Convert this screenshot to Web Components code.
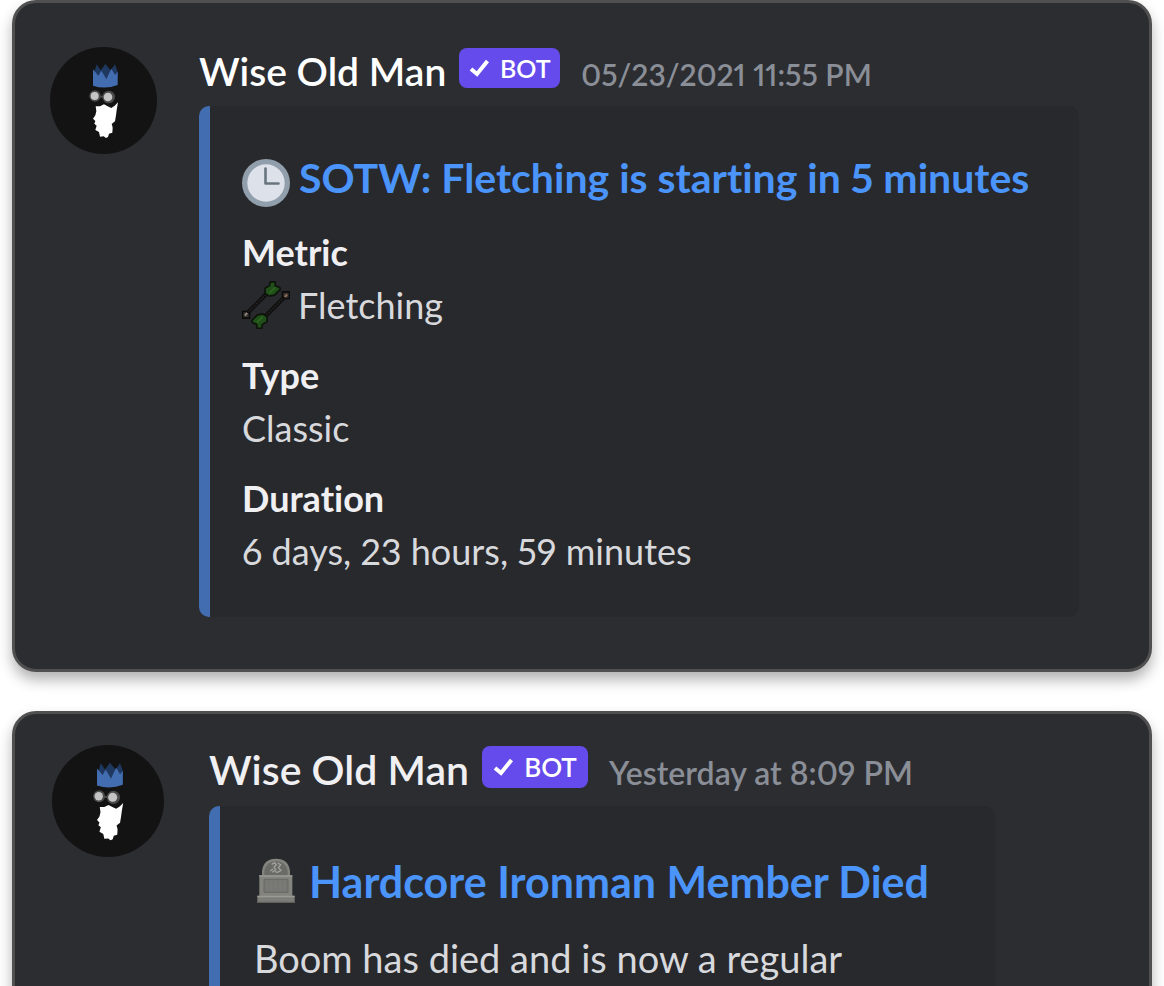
<!DOCTYPE html>
<html lang="en">
<head>
<meta charset="utf-8">
<title>Wise Old Man</title>
<style>
  html { scrollbar-width: none; }
  body {
    margin: 0;
    padding: 0 12px;
    background: #fff;
    font-family: Lato, "Open Sans", sans-serif;
    font-variant-ligatures: none;
    font-variant-numeric: proportional-nums;
    color: #d8d9dd;
  }
  main { display: flex; flex-direction: column; gap: 39px; }
</style>
</head>
<body>
<main>
  <message-card stamp="05/23/2021 11:55 PM">
    <embed-panel>
      <clock-icon slot="icon"></clock-icon>
      <a slot="title" href="#competition">SOTW: Fletching is starting in 5 minutes</a>
      <embed-field label="Metric"><arrows-icon></arrows-icon>Fletching</embed-field>
      <embed-field label="Type">Classic</embed-field>
      <embed-field label="Duration">6 days, 23 hours, 59 minutes</embed-field>
    </embed-panel>
  </message-card>
  <message-card large stamp="Yesterday at 8:09 PM">
    <embed-panel>
      <grave-icon slot="icon"></grave-icon>
      <a slot="title" href="#member">Hardcore Ironman Member Died</a>
      <embed-text>Boom has died and is now a regular</embed-text>
    </embed-panel>
  </message-card>
</main>

<script>
const define = (name, html, setup) => {
  const template = document.createElement('template');
  template.innerHTML = html;
  customElements.define(name, class extends HTMLElement {
    constructor() {
      super();
      this.attachShadow({ mode: 'open' }).append(template.content.cloneNode(true));
    }
    connectedCallback() { if (setup) setup(this, this.shadowRoot); }
  });
};

define('old-man-avatar', `
  <style>
    :host { display: block; width: var(--avatar); height: var(--avatar); }
    svg { display: block; width: 100%; height: 100%; }
  </style>
  <svg viewBox="0 0 107 107" role="img" aria-label="Wise Old Man avatar">
    <circle cx="53.5" cy="53.5" r="53.5" fill="#131313"/>
    <g transform="translate(30 8) scale(.3333)">
      <path d="M40 60L50 28L62 46L76 27L92 46L105 28L113 50V70H40Z" fill="#1f3860"/>
      <path d="M39 43L55 62L64 47L79 72L94 41L105 60L113 50V90Q76 104 39 92Z" fill="#436db1"/>
      <circle cx="45" cy="123" r="17" fill="#4b4b4b"/>
      <circle cx="86" cy="126" r="19" fill="#4b4b4b"/>
      <path d="M58 122H72V128H58Z" fill="#4b4b4b"/>
      <circle cx="44" cy="123" r="12" fill="#c4c4c4"/>
      <circle cx="84" cy="126" r="13" fill="#c4c4c4"/>
      <path d="M47 154L60 154L72 148L83 154L94 159L104 152L114 142L110 166L108 181L105 199L95 207L97 213L98 219L97 233L87 236L84 246L78 249L71 244L60 245L57 231L46 225L50 212L43 206L46 198L39 191L46 181L49 169Z" fill="#fff"/>
    </g>
  </svg>`);

define('clock-icon', `
  <style>:host, svg { display: block; width: 48px; height: 48px; }</style>
  <svg viewBox="0 0 48 48" aria-hidden="true">
    <circle cx="24" cy="24" r="24" fill="#919eab"/>
    <circle cx="24" cy="24" r="18.7" fill="#dde2ea"/>
    <path d="M23.5 9.5V24.5H36.5" fill="none" stroke="#68757f" stroke-width="2.6" stroke-linecap="round" stroke-linejoin="round"/>
  </svg>`);

define('arrows-icon', `
  <style>:host { display: block; width: 48px; height: 48px; } svg { display: block; }</style>
  <svg width="48" height="48" viewBox="20 20 146 146" aria-hidden="true">
    <g>
      <path d="M38 116L98 56" stroke="#101010" stroke-width="13"/>
      <path d="M38 116L98 56" stroke="#292521" stroke-width="4" stroke-dasharray="5 4"/>
      <path d="M90 42L104 34L106 22L121 23L121 34L135 40L136 46L119 63L103 66L90 58Z" fill="#214f19" stroke="#0c130a" stroke-width="5"/>
      <path d="M103 57L121 40" stroke="#2d6b20" stroke-width="4"/>
      <path d="M22 113L32 112L43 118L43 133L22 133Z" fill="#37322f" stroke="#0b0b0b" stroke-width="5"/>
      <path d="M29 125L36 117" stroke="#8a817b" stroke-width="6"/>
    </g>
    <g transform="rotate(180 93 93)">
      <path d="M38 116L98 56" stroke="#101010" stroke-width="13"/>
      <path d="M38 116L98 56" stroke="#292521" stroke-width="4" stroke-dasharray="5 4"/>
      <path d="M90 42L104 34L106 22L121 23L121 34L135 40L136 46L119 63L103 66L90 58Z" fill="#214f19" stroke="#0c130a" stroke-width="5"/>
      <path d="M103 57L121 40" stroke="#2d6b20" stroke-width="4"/>
      <path d="M22 113L32 112L43 118L43 133L22 133Z" fill="#37322f" stroke="#0b0b0b" stroke-width="5"/>
      <path d="M29 125L36 117" stroke="#8f6a55" stroke-width="6"/>
    </g>
  </svg>`);

define('grave-icon', `
  <style>:host { display: block; width: 46px; height: 48px; } svg { display: block; }</style>
  <svg width="44" height="48" viewBox="27 20 132 144" aria-hidden="true">
    <path d="M51 76V62Q56 25 93 25Q130 25 135 62V76Z" fill="#84847f"/>
    <path d="M58 74V62Q64 33 93 33Q122 33 128 62V74Z" fill="#6a6a67"/>
    <path d="M80 42L89 37L94 44L87 50L92 58L82 66M98 38L107 43L100 52L108 60L98 66L90 64M76 62L84 56" fill="none" stroke="#a2a29d" stroke-width="4"/>
    <path d="M43 75H142V137H43Z" fill="#84847f"/>
    <path d="M43 75H142V79H43Z" fill="#9a9a95"/>
    <path d="M57 87H129V126H57Z" fill="#777774" stroke="#686865" stroke-width="3"/>
    <path d="M66 94V118M78 92V121M92 94V119M106 92V120M119 94V119" stroke="#7e7e7a" stroke-width="3"/>
    <path d="M37 136H149V158H37Z" fill="#7c7c78"/>
    <path d="M37 136H149V141H37Z" fill="#9b9b95"/>
    <path d="M37 154H149V158H37Z" fill="#5f5f5c"/>
  </svg>`);

define('bot-tag', `
  <style>
    :host {
      display: flex; align-items: center; justify-content: center; gap: 10px;
      box-sizing: border-box; width: var(--tag-width); height: var(--tag-height);
      border-radius: 8px; background: #654bec; color: #fff;
      font-size: var(--tag-size); line-height: 32px; font-weight: 600;
    }
    svg { display: block; width: 21px; height: 18px; }
  </style>
  <svg viewBox="0 0 21 18" aria-hidden="true"><path d="M2 10L8 15L18.500 2" fill="none" stroke="#fff" stroke-width="4"/></svg>
  <span>BOT</span>`);

define('message-card', `
  <style>
    :host {
      --avatar: 107px; --name-size: 39px; --name-line: 48px; --stamp-size: 30px;
      --tag-width: 101px; --tag-height: 40px; --tag-size: 25px;
      --title-size: 41px; --embed-inset: 32px; --embed-top: 44px; --embed-width: 880px;
      --icon-top: 9px;
      --name-color: #fff;
      display: flex; align-items: flex-start; gap: 42px;
      padding: 44px 70px 52px 35px;
      border: 3px solid #505050; border-radius: 24px;
      background: #2c2d31;
      box-shadow: 0 8px 14px rgba(0, 0, 0, .3);
    }
    :host([large]) {
      --avatar: 112px; --name-size: 41px; --name-line: 50px; --stamp-size: 32px;
      --tag-width: 106px; --tag-height: 42px; --tag-size: 26px;
      --title-size: 43px; --embed-inset: 34px; --embed-top: 48px; --embed-width: 786px;
      --icon-top: 3px;
      --name-color: #f0f0f3;
      gap: 45px;
      padding-top: 31px; padding-left: 37px;
    }
    old-man-avatar { flex: none; }
    .content { flex: 1; min-width: 0; }
    header { display: flex; align-items: baseline; gap: 13px; padding-bottom: 11px; }
    h2 { margin: 0; font-size: var(--name-size); line-height: var(--name-line); font-weight: 600; color: var(--name-color); white-space: nowrap; }
    bot-tag { flex: none; align-self: flex-start; margin: 1px 8px 0 0; }
    time { font-size: var(--stamp-size); line-height: 32px; font-weight: 600; color: #8a8e97; white-space: nowrap; }
  </style>
  <old-man-avatar></old-man-avatar>
  <div class="content">
    <header>
      <h2>Wise Old Man</h2>
      <bot-tag></bot-tag>
      <time></time>
    </header>
    <slot></slot>
  </div>`, (host, root) => {
  root.querySelector('time').textContent = host.getAttribute('stamp');
});

define('embed-panel', `
  <style>
    :host {
      display: block; box-sizing: border-box; max-width: var(--embed-width);
      padding: var(--embed-top) 32px 42px var(--embed-inset);
      border-left: 11px solid #436db1; border-radius: 10px;
      background: #28292c;
    }
    .title { display: flex; align-items: flex-start; gap: 9px; height: 56px; margin-bottom: 22px; }
    ::slotted([slot="icon"]) { flex: none; margin-top: var(--icon-top); }
    h3 { margin: 0; font-size: var(--title-size); line-height: 56px; font-weight: 700; white-space: nowrap; }
    ::slotted(a) { color: #4b94fa; text-decoration: none; }
    .body { display: flex; flex-direction: column; gap: 22px; }
  </style>
  <div class="title"><slot name="icon"></slot><h3><slot name="title"></slot></h3></div>
  <div class="body"><slot></slot></div>`);

define('embed-field', `
  <style>
    :host { display: flex; flex-direction: column; gap: 5px; font-size: 36px; line-height: 48px; }
    .label { font-weight: 700; color: #f0f0f3; }
    .value { display: flex; align-items: center; gap: 8px; }
  </style>
  <div class="label"></div>
  <div class="value"><slot></slot></div>`, (host, root) => {
  root.querySelector('.label').textContent = host.getAttribute('label');
});

define('embed-text', `
  <style>:host { display: block; font-size: 38px; line-height: 52px; white-space: nowrap; }</style>
  <slot></slot>`);
</script>
</body>
</html>
